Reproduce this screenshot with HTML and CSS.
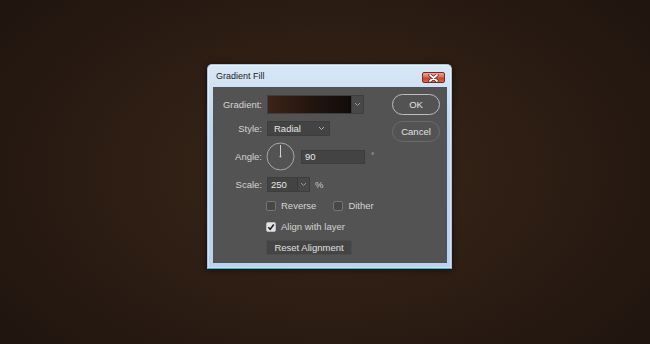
FILE: index.html
```html
<!DOCTYPE html>
<html>
<head>
<meta charset="utf-8">
<link rel="stylesheet" href="styles.css">
</head>
<body>
<div class="dialog">
  <div class="titlebar">
    <span class="title">Gradient Fill</span>
    <span class="close"><svg width="11" height="8" viewBox="0 0 11 8"><path d="M2 1 L9 7 M9 1 L2 7" stroke="#5a1a10" stroke-width="3.2" stroke-linecap="round"/><path d="M2 1 L9 7 M9 1 L2 7" stroke="#ffffff" stroke-width="1.8" stroke-linecap="round"/></svg></span>
  </div>
  <div class="panel">
    <div class="form">
      <div class="row r1">
        <span class="label">Gradient:</span>
        <div class="gradbox">
          <div class="swatch"></div>
          <div class="arrow"><svg width="7" height="5" viewBox="0 0 7 5"><path d="M1 1 L3.5 3.5 L6 1" fill="none" stroke="#9a9a9a" stroke-width="1"/></svg></div>
        </div>
      </div>
      <div class="row r2">
        <span class="label">Style:</span>
        <div class="select"><span>Radial</span><svg width="7" height="5" viewBox="0 0 7 5"><path d="M1 1 L3.5 3.5 L6 1" fill="none" stroke="#b0b0b0" stroke-width="1"/></svg></div>
      </div>
      <div class="row r3">
        <span class="label">Angle:</span>
        <svg class="dial" width="29" height="29" viewBox="0 0 29 29"><circle cx="14.5" cy="14.5" r="13.5" fill="none" stroke="#a8a8a8" stroke-width="1"/><path d="M14.5 3 L14.5 14.5" stroke="#d0d0d0" stroke-width="1"/><circle cx="14.5" cy="14.5" r="1" fill="#d0d0d0"/></svg>
        <div class="input angle">90</div>
        <span class="unit deg">°</span>
      </div>
      <div class="row r4">
        <span class="label">Scale:</span>
        <div class="combo"><span class="val">250</span><span class="carrow"><svg width="7" height="5" viewBox="0 0 7 5"><path d="M1 1 L3.5 3.5 L6 1" fill="none" stroke="#9a9a9a" stroke-width="1"/></svg></span></div>
        <span class="unit pct">%</span>
      </div>
      <div class="row r5 checks">
        <span class="cb"></span><span class="cbtext">Reverse</span>
        <span class="cb dither"></span><span class="cbtext">Dither</span>
      </div>
      <div class="row r6 checks">
        <span class="cb on"><svg width="8" height="8" viewBox="0 0 8 8"><path d="M1.3 4.2 L3.2 6.2 L6.8 1.6" fill="none" stroke="#222" stroke-width="1.6"/></svg></span><span class="cbtext">Align with layer</span>
      </div>
      <div class="row r7 checks">
        <span class="reset">Reset Alignment</span>
      </div>
    </div>
    <div class="buttons">
      <span class="btn ok">OK</span>
      <span class="btn cancel">Cancel</span>
    </div>
  </div>
</div>
</body>
</html>
```

FILE: styles.css
```css
html, body {
  margin: 0;
  padding: 0;
}
body {
  width: 650px;
  height: 344px;
  overflow: hidden;
  background: radial-gradient(ellipse 62% 75% at 50% 50%, #3b2718 0%, #2e1e14 50%, #20150f 100%);
  font-family: "Liberation Sans", Arial, sans-serif;
  padding-top: 64px;
  padding-left: 207px;
  box-sizing: border-box;
}
.dialog {
  width: 245px;
  height: 205px;
  box-sizing: border-box;
  border: 1px solid #a9c5de;
  border-bottom-color: #33b6da;
  border-radius: 5px 5px 0 0;
  background: linear-gradient(#d9e8f6, #bfd7ee 30%, #bad3eb);
  padding: 0 4px 5px 5px;
  box-shadow: 0 1px 6px rgba(0,0,0,0.55), inset 0 0 0 1px rgba(255,255,255,0.35);
}
.titlebar {
  height: 22px;
  box-sizing: border-box;
  padding-top: 6px;
  display: flex;
  justify-content: space-between;
  align-items: flex-start;
}
.title {
  font-family: "Liberation Sans", Arial, sans-serif;
  font-size: 9px;
  color: #1b1b1b;
  padding-left: 3px;
  line-height: 11px;
}
.close {
  width: 23px;
  height: 11px;
  box-sizing: border-box;
  margin-top: 1px;
  margin-right: 2px;
  border: 1px solid #7d2a1c;
  border-radius: 2px;
  background: linear-gradient(#eaa597, #d66f5c 45%, #c2432c 55%, #cf6a4f);
  display: flex;
  align-items: center;
  justify-content: center;
}
.panel {
  height: 176px;
  background: #535353;
  box-shadow: inset 0 0 0 1px #4a545e;
  display: flex;
}
.form {
  width: 179px;
  padding-top: 8px;
}
.row {
  display: flex;
  align-items: center;
  font-size: 9.5px;
  color: #d4d4d4;
}
.label {
  width: 49px;
  text-align: right;
  margin-right: 5px;
  flex: none;
}
.r1 { height: 19px; }
.r2 { height: 15px; margin-top: 7px; }
.r3 { height: 29px; margin-top: 6px; }
.r4 { height: 15px; margin-top: 6px; }
.r5 { height: 11px; margin-top: 8px; }
.r6 { height: 11px; margin-top: 10px; }
.r7 { height: 15px; margin-top: 8px; }
.checks { padding-left: 53px; }

.gradbox {
  display: flex;
  height: 19px;
  width: 97px;
  box-sizing: border-box;
  border: 1px solid #3e3e3e;
}
.swatch {
  flex: 1;
  background: linear-gradient(to right, #3b2419, #24160f 50%, #110b08);
}
.arrow {
  width: 11px;
  background: #484848;
  border-left: 1px solid #3a3a3a;
  display: flex;
  align-items: center;
  justify-content: center;
}
.select {
  width: 63px;
  height: 15px;
  box-sizing: border-box;
  background: #434343;
  border: 1px solid #3d3d3d;
  display: flex;
  align-items: center;
  justify-content: space-between;
  padding: 0 4px 0 6px;
  color: #e6e6e6;
}
.dial {
  margin-left: -1px;
  flex: none;
}
.input {
  height: 14px;
  box-sizing: border-box;
  background: #434343;
  border: 1px solid #3d3d3d;
  color: #e8e8e8;
  display: flex;
  align-items: center;
  padding-left: 3px;
}
.angle {
  width: 64px;
  margin-left: 6px;
}
.unit { color: #c8c8c8; }
.deg { margin-left: 6px; font-size: 8px; margin-top: -3px; }
.pct { margin-left: 5px; }
.combo {
  width: 43px;
  height: 15px;
  box-sizing: border-box;
  background: #434343;
  border: 1px solid #3d3d3d;
  display: flex;
}
.val {
  flex: 1;
  color: #e8e8e8;
  padding-left: 3px;
  display: flex;
  align-items: center;
}
.carrow {
  width: 11px;
  border-left: 1px solid #3a3a3a;
  background: #484848;
  display: flex;
  align-items: center;
  justify-content: center;
}
.cb {
  width: 10px;
  height: 10px;
  box-sizing: border-box;
  border: 1px solid #747474;
  border-radius: 2px;
  background: #474747;
  flex: none;
  display: flex;
  align-items: center;
  justify-content: center;
}
.cb.on {
  background: #e4e4e4;
  border-color: #bdbdbd;
}
.cbtext {
  margin-left: 5px;
  color: #d4d4d4;
}
.dither { margin-left: 17px; }
.reset {
  width: 86px;
  height: 15px;
  box-sizing: border-box;
  background: #444444;
  border: 1px solid #4c4c4c;
  display: flex;
  align-items: center;
  justify-content: center;
  color: #e0e0e0;
}
.buttons {
  padding-top: 7px;
  display: flex;
  flex-direction: column;
  gap: 6px;
}
.btn {
  width: 48px;
  height: 21px;
  box-sizing: border-box;
  border-radius: 11px;
  display: flex;
  align-items: center;
  justify-content: center;
  font-size: 9.5px;
  color: #e2e2e2;
  background: #535353;
}
.ok { border: 1.5px solid #bdbdbd; }
.cancel { border: 1.5px solid #6b6b6b; }
```
